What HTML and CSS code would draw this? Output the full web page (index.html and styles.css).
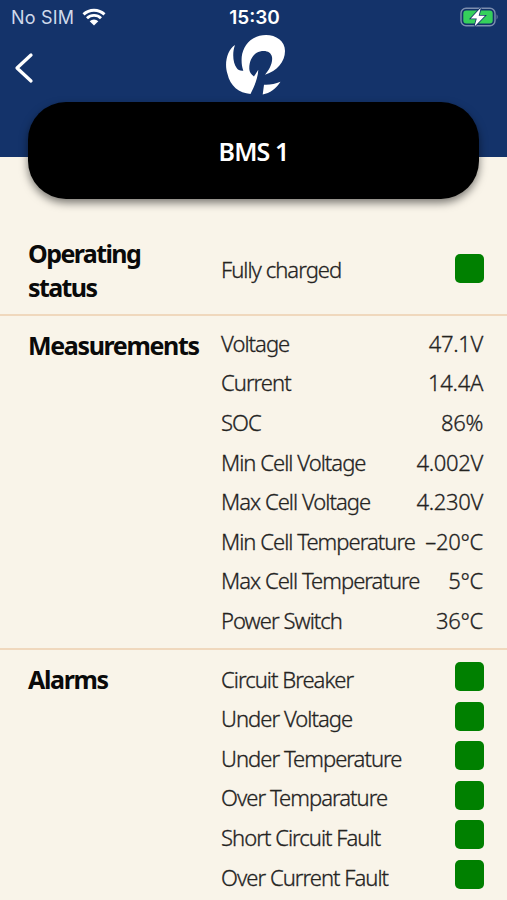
FILE: index.html
```html
<!DOCTYPE html>
<html lang="en">
<head>
    <meta charset="UTF-8">
    <meta name="viewport" content="width=device-width, initial-scale=1.0">
    <title>BMS 1</title>
    <link rel="stylesheet" href="styles.css">
</head>
<body>
    <header class="header">
        <div class="statusbar">
            <div class="carrier">
                <span>No SIM</span>
                <svg class="wifi" viewBox="0 0 24 18" width="24" height="18">
                    <path d="M1.5 6.4a15.2 15.2 0 0 1 21 0M5 10.2a10.2 10.2 0 0 1 14 0" fill="none" stroke="#fff" stroke-width="2.9"/>
                    <path d="M12 17.5l-4.3-4.3a6.2 6.2 0 0 1 8.6 0z" fill="#fff"/>
                </svg>
            </div>
            <div class="time">15:30</div>
            <svg class="battery" viewBox="0 0 39 22" width="39" height="22">
                <rect x="1" y="2.3" width="34" height="17.4" rx="5" fill="none" stroke="#7c8eae" stroke-width="1.4"/>
                <rect x="3.3" y="4.6" width="29.4" height="12.8" rx="3" fill="#35d05b"/>
                <path d="M36.6 8.3q2 2.7 0 5.4z" fill="#7c8eae"/>
                <path d="M20.8 1.7L10.8 12.4h6l-2.3 8L25 9.7h-6.3z" fill="#fff" stroke="#14336a" stroke-width="1.6" paint-order="stroke"/>
            </svg>
        </div>
        <div class="navbar">
            <svg class="back" viewBox="0 0 20 32" width="20" height="32">
                <path d="M17 3L3 16l14 13" fill="none" stroke="#fff" stroke-width="3.3" stroke-linecap="round" stroke-linejoin="round"/>
            </svg>
            <svg class="logo" viewBox="0 0 62 60" width="62" height="60">
                <path d="M11 10C3 15 0 29 3.500 39C6 51 15 58 26.500 59C30 52 34 43 34.300 34.700C33 37 31.500 39 30 41.500C27 39 25.300 37 25.300 34C25 26 29 18 36 16.500C42 15 47 17 48 22C49 28 45 35 41 39.700C53 36 61 27 61 16C61 6 52 0 42 0C28 0 19 10 17.700 22C17.400 27 17.700 31 19.300 35.700C16 36 14 35 12.700 33C9 28 8 18 11 10z" fill="#fff"/>
                <path d="M40 49.700C46 50 51 49 56.500 46.700C52 54 46 58 38.700 59.500z" fill="#fff"/>
            </svg>
        </div>
        <div class="title">BMS 1</div>
    </header>

    <main>
        <section class="section operating">
            <h2>Operating status</h2>
            <div class="rows">
                <div class="row"><span>Fully charged</span><i class="led"></i></div>
            </div>
        </section>

        <section class="section">
            <h2>Measurements</h2>
            <div class="rows">
                <div class="row"><span>Voltage</span><span class="value">47.1V</span></div>
                <div class="row"><span>Current</span><span class="value">14.4A</span></div>
                <div class="row"><span>SOC</span><span class="value">86%</span></div>
                <div class="row"><span>Min Cell Voltage</span><span class="value">4.002V</span></div>
                <div class="row"><span>Max Cell Voltage</span><span class="value">4.230V</span></div>
                <div class="row"><span>Min Cell Temperature</span><span class="value">–20°C</span></div>
                <div class="row"><span>Max Cell Temperature</span><span class="value">5°C</span></div>
                <div class="row"><span>Power Switch</span><span class="value">36°C</span></div>
            </div>
        </section>

        <section class="section alarms">
            <h2>Alarms</h2>
            <div class="rows">
                <div class="row"><span>Circuit Breaker</span><i class="led"></i></div>
                <div class="row"><span>Under Voltage</span><i class="led"></i></div>
                <div class="row"><span>Under Temperature</span><i class="led"></i></div>
                <div class="row"><span>Over Temparature</span><i class="led"></i></div>
                <div class="row"><span>Short Circuit Fault</span><i class="led"></i></div>
                <div class="row"><span>Over Current Fault</span><i class="led"></i></div>
                <div class="row"><span></span><i class="led"></i></div>
            </div>
        </section>
    </main>
</body>
</html>
```
FILE: styles.css
```css
*{
    box-sizing: border-box;
}
body{
    margin: 0;
    height: 900px;
    overflow: hidden;
    background-color: #f9f4e9;
    color: #24231f;
    font-family: "Noto Sans", "Open Sans", sans-serif;
}
.header{
    height: 157px;
    background-color: #14336a;
}
.statusbar{
    display: grid;
    grid-template-columns: 1fr auto 1fr;
    align-items: center;
    height: 34px;
    padding: 0 8px 0 11px;
    color: #fff;
    font-family: Inter, sans-serif;
    font-size: 18px;
}
.carrier{
    display: flex;
    align-items: center;
    gap: 8px;
    color: #cfd9ea;
    letter-spacing: 0.2px;
}
.time{
    margin-left: -1px;
    font-weight: 600;
    font-size: 19px;
}
.battery{
    justify-self: end;
}
.navbar{
    display: grid;
    grid-template-columns: 1fr 62px 1fr;
    align-items: center;
    height: 68px;
    padding: 0 9px 0 14px;
}
.logo{
    margin-top: -7px;
    margin-left: -1px;
}
.title{
    display: flex;
    align-items: center;
    justify-content: center;
    height: 97px;
    margin: 0 28px;
    border-radius: 38px;
    background-color: #000;
    box-shadow: 0 4px 9px rgba(0, 0, 0, 0.5);
    color: #fff;
    font-size: 25px;
    font-weight: 600;
    letter-spacing: -0.9px;
}
main{
    padding-top: 67px;
}
.section{
    display: flex;
    padding: 7px 24px 8px 28px;
    border-bottom: 2px solid #f0d8bd;
}
h2{
    width: 193px;
    margin: 5px 0 0;
    color: #0a0a0a;
    font-size: 25px;
    line-height: 34px;
    font-weight: 700;
    letter-spacing: -1.35px;
}
.rows{
    flex: 1;
}
.row{
    display: flex;
    align-items: center;
    justify-content: space-between;
    height: 39.6px;
    font-size: 22px;
    font-weight: 300;
    letter-spacing: -0.97px;
    white-space: nowrap;
    -webkit-text-stroke: 0.3px #24231f;
}
.value{
    letter-spacing: -0.3px;
}
.led{
    width: 29px;
    height: 29px;
    margin-right: -1px;
    border-radius: 5px;
    background-color: #008000;
}
.operating{
    height: 92px;
}
.operating h2{
    padding-right: 50px;
    letter-spacing: -1.6px;
}
.operating .rows{
    padding-top: 18px;
}
.alarms .row span{
    padding-top: 4px;
}
```
